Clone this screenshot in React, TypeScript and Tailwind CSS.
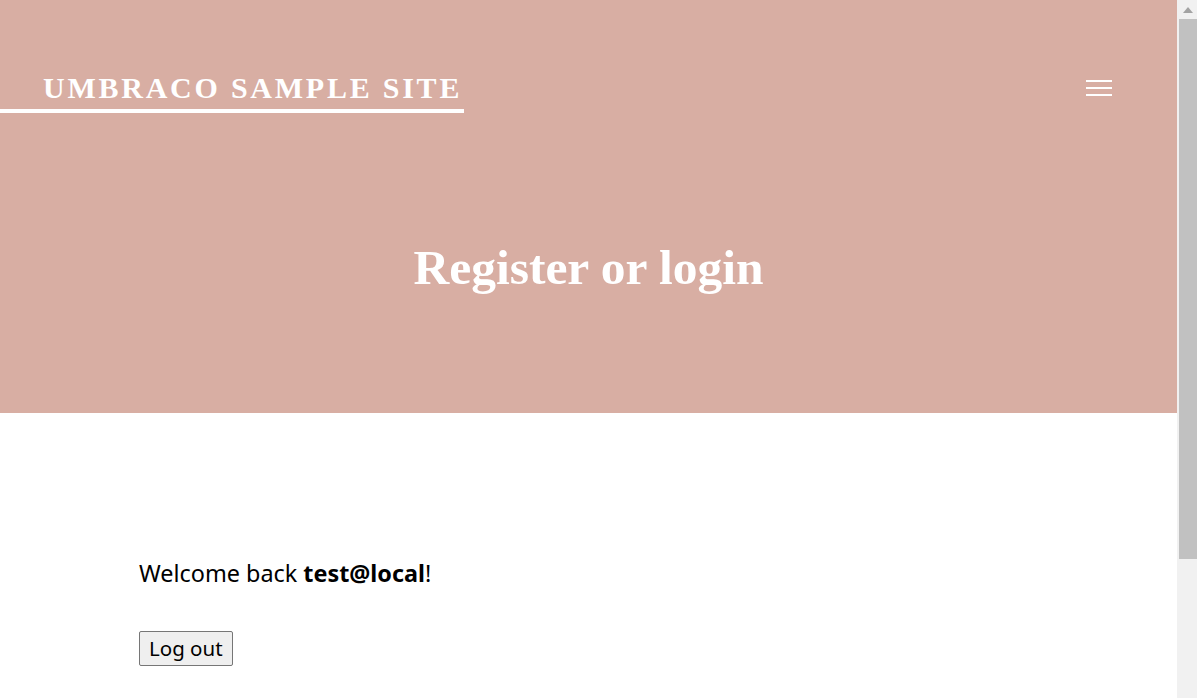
export default function App() {
  return (
    <div className="flex h-[698px] w-[1197px] overflow-hidden bg-white font-['Noto_Sans',sans-serif]">
      <div className="flex-1">
        <header className="flex h-[413px] flex-col bg-[#d8aea3]">
          <div className="flex items-start justify-between pt-[71px]">
            <a className="block border-b-[4px] border-white pb-[4px] pl-[43px] pr-[2px] font-['Liberation_Serif',serif] text-[30px] leading-[34px] font-bold tracking-[0.092em] text-white uppercase">
              Umbraco Sample Site
            </a>
            <button className="mr-[65px] mt-[9px] flex w-[26px] flex-col gap-[5px]">
              <span className="h-[2px] w-full bg-white" />
              <span className="h-[2px] w-full bg-white" />
              <span className="h-[2px] w-full bg-white" />
            </button>
          </div>
          <h1 className="mt-[127px] text-center font-['Liberation_Serif',serif] text-[49.5px] leading-[56px] font-bold text-white">
            Register or login
          </h1>
        </header>
        <main className="pl-[139px] pt-[144px] text-black">
          <p className="text-[23.4px] leading-[32px]">
            Welcome back <strong className="font-bold">test@local</strong>!
          </p>
          <button className="mt-[42px] h-[35px] rounded-[2px] border border-[#767676] bg-[#efefef] px-[9px] pb-[1px] text-[20.5px] leading-[26px] text-black">
            Log out
          </button>
        </main>
      </div>
      <div className="flex w-[20px] flex-col bg-[#f1f1f1]">
        <div className="flex h-[19px] items-center justify-center pl-[2px]">
          <svg width="10" height="6" viewBox="0 0 10 6">
            <path d="M5 0 L10 6 L0 6 Z" fill="#a3a3a3" />
          </svg>
        </div>
        <div className="ml-[2px] h-[540px] bg-[#c1c1c1]" />
      </div>
    </div>
  )
}
